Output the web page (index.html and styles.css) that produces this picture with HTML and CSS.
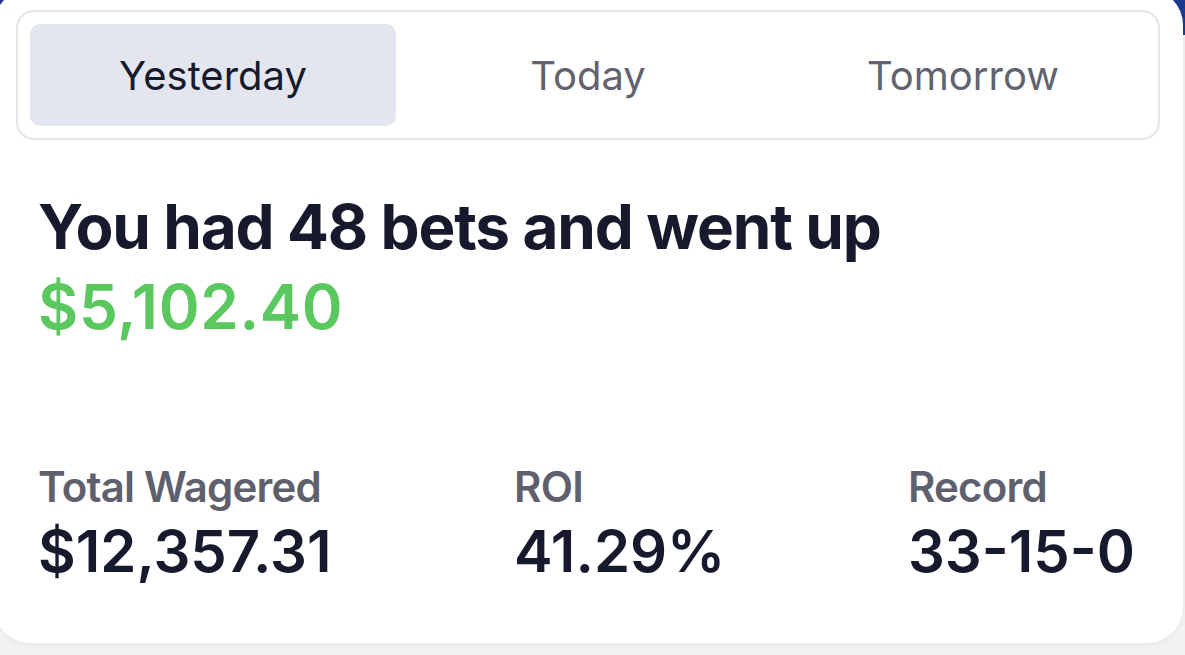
FILE: index.html
```html
<!DOCTYPE html>
<html lang="en">
<head>
<meta charset="utf-8">
<title>Daily summary</title>
<link rel="stylesheet" href="styles.css">
</head>
<body>
<main class="card">
  <nav class="tabs">
    <div class="tab active">Yesterday</div>
    <div class="tab">Today</div>
    <div class="tab">Tomorrow</div>
  </nav>
  <section class="summary">
    <h1 class="headline">You had 48 bets and went up</h1>
    <div class="amount">$5,102.40</div>
  </section>
  <section class="stats">
    <div class="stat">
      <div class="label">Total Wagered</div>
      <div class="value">$12,357.31</div>
    </div>
    <div class="stat">
      <div class="label">ROI</div>
      <div class="value">41.29%</div>
    </div>
    <div class="stat">
      <div class="label">Record</div>
      <div class="value">33-15-0</div>
    </div>
  </section>
</main>
</body>
</html>
```

FILE: styles.css
```css
html, body {
  margin: 0;
  padding: 0;
}

body {
  width: 1185px;
  height: 655px;
  overflow: hidden;
  background: linear-gradient(#1c3b8e 0, #1c3b8e 35px, #f2f2f4 35px, #f2f2f4 100%);
  font-family: Inter, "Noto Sans", "Liberation Sans", sans-serif;
}

.card {
  box-sizing: border-box;
  width: 1189px;
  height: 654px;
  margin: -11px 0 0 -6px;
  padding: 21px 23px 0 22px;
  background: #ffffff;
  border-radius: 36px;
  box-shadow: 0 2px 6px rgba(0, 0, 0, 0.05);
}

.tabs {
  display: grid;
  grid-template-columns: repeat(3, 1fr);
  gap: 9px;
  padding: 12px;
  border: 2px solid #e4e6ea;
  border-radius: 18px;
}

.tab {
  height: 102px;
  display: flex;
  align-items: center;
  justify-content: center;
  font-size: 40px;
  font-weight: 400;
  color: #62636f;
  border-radius: 10px;
  letter-spacing: 0;
}

.tab.active {
  background: #e3e6ee;
  color: #161a2c;
}

.summary {
  margin-top: 47px;
  padding-left: 22px;
}

.headline {
  margin: 0;
  font-size: 62px;
  line-height: 80px;
  font-weight: 700;
  color: #161a2c;
  letter-spacing: -1.15px;
}

.amount {
  font-size: 62px;
  line-height: 80px;
  font-weight: 600;
  color: #5ac85e;
  letter-spacing: 0.6px;
}

.stats {
  display: flex;
  justify-content: space-between;
  margin-top: 114px;
  padding: 0 25px 0 22px;
}

.label {
  font-size: 42px;
  line-height: 52px;
  font-weight: 600;
  color: #5f606d;
  letter-spacing: -0.8px;
}

.value {
  margin-top: 6px;
  font-size: 58px;
  line-height: 64px;
  font-weight: 600;
  color: #161a2c;
  letter-spacing: 0;
}
```
